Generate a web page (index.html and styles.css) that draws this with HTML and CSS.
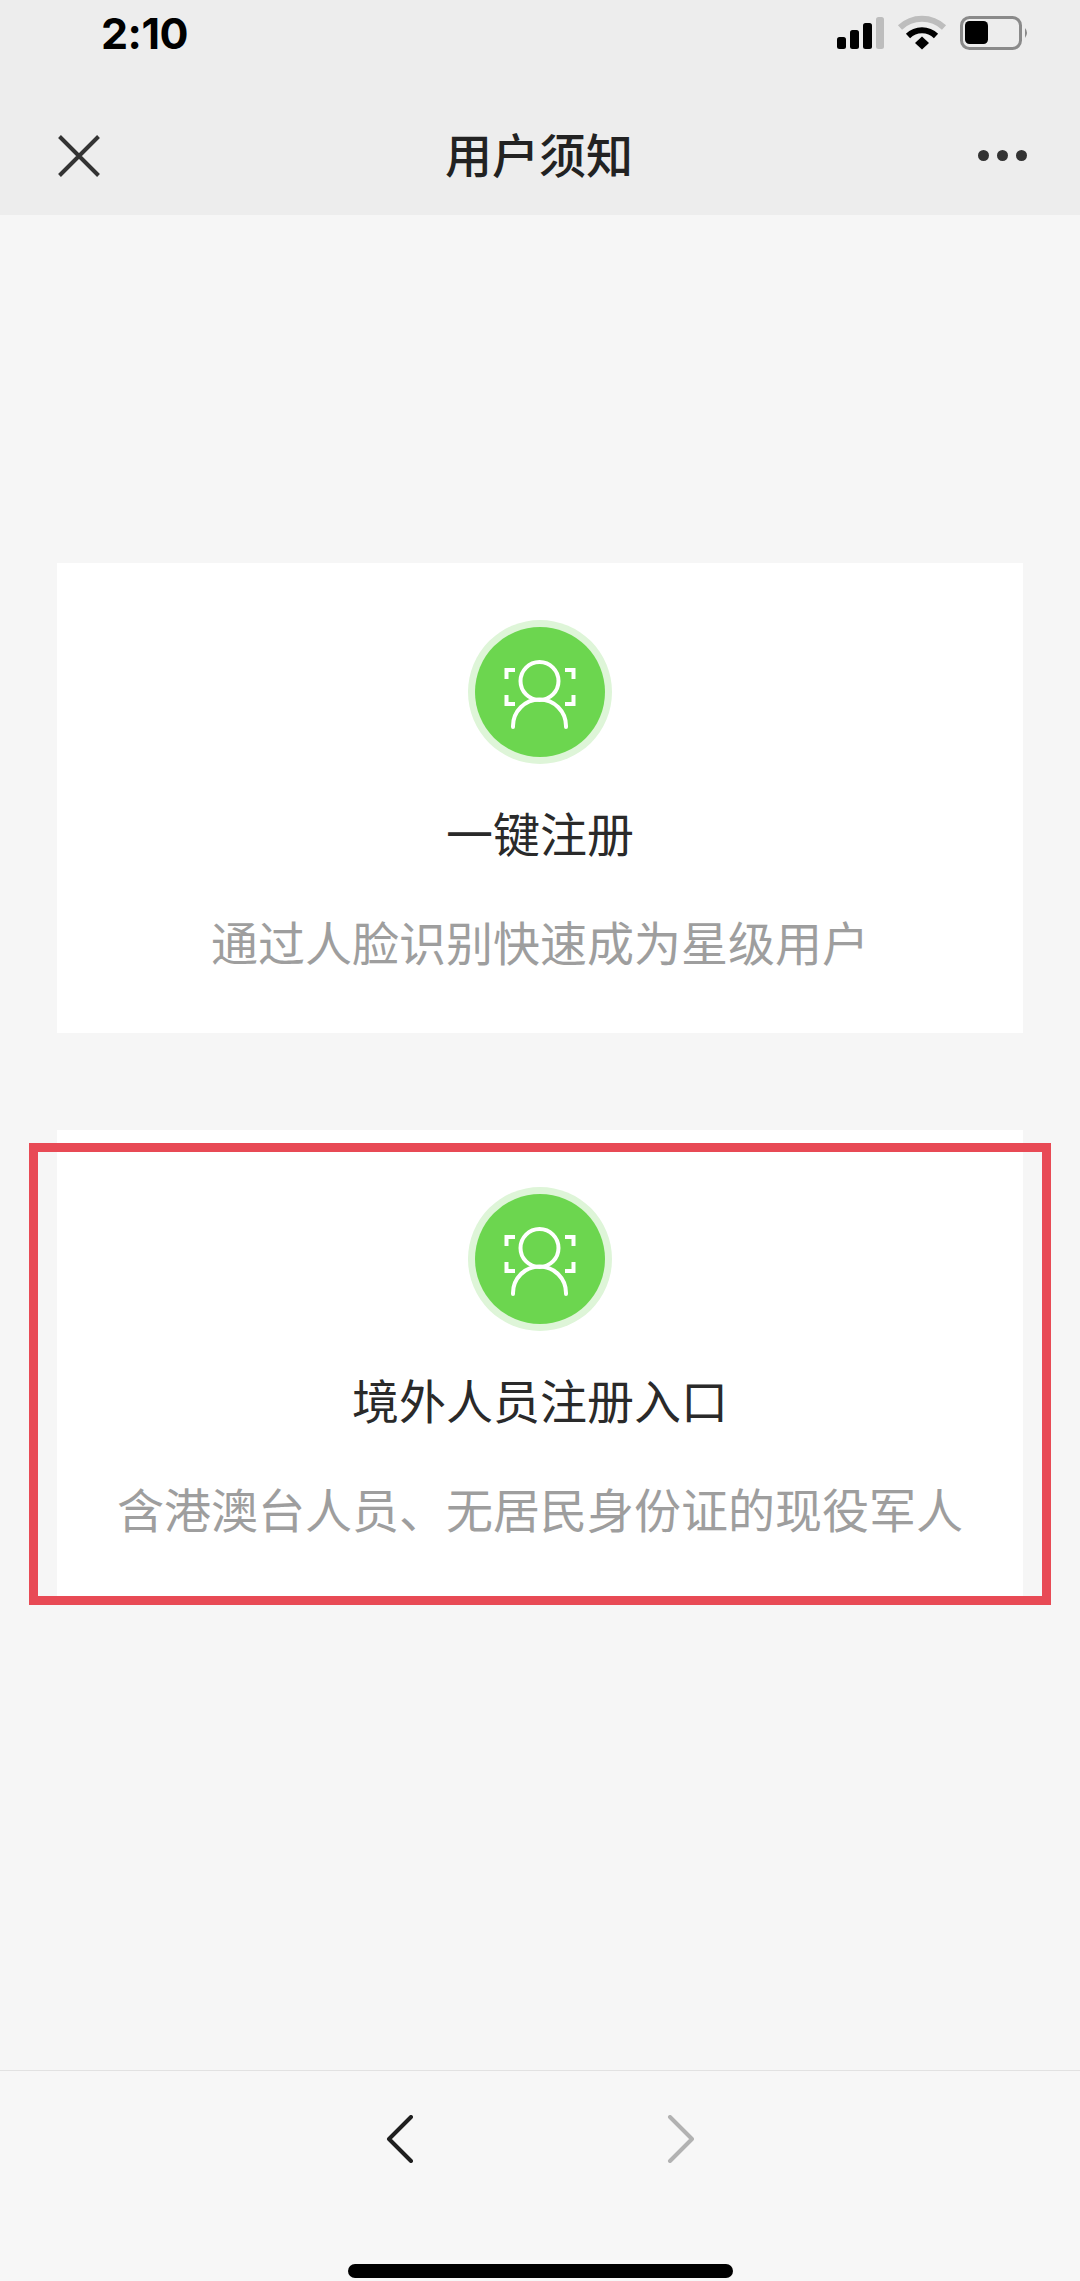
FILE: index.html
```html
<!DOCTYPE html>
<html lang="zh-CN">
<head>
<meta charset="utf-8">
<title>用户须知</title>
<link rel="stylesheet" href="styles.css">
</head>
<body>
<div class="page">
  <header class="header">
    <div class="status">
      <span class="time">2:10</span>
      <svg class="status-icons" width="193" height="36" viewBox="0 0 193 36">
        <rect x="0" y="22" width="9" height="12" rx="2.5" fill="#000"/>
        <rect x="13" y="15" width="9" height="19" rx="2.5" fill="#000"/>
        <rect x="26" y="8" width="9" height="26" rx="2.5" fill="#000"/>
        <rect x="39" y="2" width="8" height="32" rx="2.5" fill="#bdbdbd"/>
        <path d="M63 12.5 A32 32 0 0 1 107 12.5" fill="none" stroke="#bdbdbd" stroke-width="6"/>
        <path d="M71 21 A20 20 0 0 1 99 21" fill="none" stroke="#000" stroke-width="6"/>
        <path d="M78 28 L85 21.5 L92 28 L85 34.500 Z" fill="#000"/>
        <rect x="124.500" y="2.500" width="59" height="31" rx="8" fill="none" stroke="#8a8a8a" stroke-width="3"/>
        <rect x="128" y="6" width="23" height="23" rx="4.500" fill="#000"/>
        <path d="M188 13 Q192 17.500 188 23 Z" fill="#8a8a8a"/>
      </svg>
    </div>
    <nav class="navbar">
      <svg class="nav-close" width="42" height="42" viewBox="0 0 42 42">
        <path d="M1.500 1.500 L40.500 40.500 M40.500 1.500 L1.500 40.500" stroke="#333" stroke-width="4" fill="none"/>
      </svg>
      <h1 class="nav-title">用户须知</h1>
      <div class="nav-more"><i></i><i></i><i></i></div>
    </nav>
  </header>

  <main class="content">
    <section class="card">
      <svg class="face" width="144" height="144" viewBox="0 0 144 144">
        <circle cx="72" cy="72" r="72" fill="#def5d8"/>
        <circle cx="72" cy="72" r="65" fill="#6cd64f"/>
        <g fill="none" stroke="#fff" stroke-width="4">
          <path d="M47 50 H38.500 V59 M97 50 H105.500 V59 M38.500 75 V84 H47 M105.500 75 V84 H97"/>
          <circle cx="71.500" cy="61" r="19"/>
          <path d="M45 106 A26.500 26.500 0 0 1 98 106 V107 M45 106 V107" stroke-linecap="round"/>
        </g>
      </svg>
      <h2 class="card-title">一键注册</h2>
      <p class="card-sub">通过人脸识别快速成为星级用户</p>
    </section>
    <section class="card card-marked">
      <svg class="face" width="144" height="144" viewBox="0 0 144 144">
        <circle cx="72" cy="72" r="72" fill="#def5d8"/>
        <circle cx="72" cy="72" r="65" fill="#6cd64f"/>
        <g fill="none" stroke="#fff" stroke-width="4">
          <path d="M47 50 H38.500 V59 M97 50 H105.500 V59 M38.500 75 V84 H47 M105.500 75 V84 H97"/>
          <circle cx="71.500" cy="61" r="19"/>
          <path d="M45 106 A26.500 26.500 0 0 1 98 106 V107 M45 106 V107" stroke-linecap="round"/>
        </g>
      </svg>
      <h2 class="card-title">境外人员注册入口</h2>
      <p class="card-sub">含港澳台人员、无居民身份证的现役军人</p>
      <div class="highlight"></div>
    </section>
  </main>

  <footer class="footer">
    <div class="arrows">
      <svg width="28" height="48" viewBox="0 0 28 48">
        <path d="M25 2 L3 24 L25 46" fill="none" stroke="#1f1f1f" stroke-width="4" stroke-linecap="round" stroke-linejoin="round"/>
      </svg>
      <svg width="28" height="48" viewBox="0 0 28 48">
        <path d="M3 2 L25 24 L3 46" fill="none" stroke="#b2b2b2" stroke-width="4" stroke-linecap="round" stroke-linejoin="round"/>
      </svg>
    </div>
    <div class="home-bar"></div>
  </footer>
</div>
</body>
</html>
```
FILE: styles.css
```css
* { box-sizing: border-box; }
html, body { margin: 0; padding: 0; }
body {
  width: 1080px;
  height: 2281px;
  overflow: hidden;
  font-family: "Liberation Sans", "Noto Sans CJK SC", sans-serif;
  background: #f6f6f6;
}
.page {
  height: 2281px;
  display: flex;
  flex-direction: column;
}
.header {
  height: 215px;
  flex: none;
  background: #ededed;
  display: flex;
  flex-direction: column;
}
.status {
  height: 66px;
  padding: 13px 50px 0 101px;
  display: flex;
  justify-content: space-between;
  align-items: flex-start;
}
.time {
  font-family: "Inter", "Liberation Sans", sans-serif;
  font-size: 43px;
  line-height: 40px;
  font-weight: 700;
  color: #000;
  letter-spacing: -0.5px;
}
.status-icons { margin-top: 2px; }
.navbar {
  flex: 1;
  padding: 30px 53px 0 58px;
  display: flex;
  align-items: center;
  justify-content: space-between;
}
.nav-close { flex: none; }
.nav-title {
  margin: 0 0 6px;
  font-family: "Noto Sans CJK SC", sans-serif;
  font-size: 47px;
  line-height: 60px;
  font-weight: 500;
  color: #222;
}
.nav-more {
  display: flex;
  gap: 8px;
  width: 49px;
}
.nav-more i {
  width: 11px;
  height: 11px;
  border-radius: 50%;
  background: #333;
}
.content {
  flex: 1;
  padding: 348px 57px 0;
  display: flex;
  flex-direction: column;
  gap: 97px;
}
.card {
  position: relative;
  height: 470px;
  background: #fff;
  padding-top: 57px;
  display: flex;
  flex-direction: column;
  align-items: center;
  text-align: center;
}
.face { flex: none; }
.card-title {
  margin: 38px 0 0;
  font-family: "Noto Sans CJK SC", sans-serif;
  font-size: 47px;
  line-height: 60px;
  font-weight: 400;
  color: #2a2a2a;
}
.card-sub {
  margin: 49px 0 0;
  font-family: "Noto Sans CJK SC", sans-serif;
  font-size: 47px;
  line-height: 60px;
  font-weight: 400;
  color: #9e9e9e;
  white-space: nowrap;
}
.highlight {
  position: absolute;
  top: 13px;
  left: -28px;
  right: -28px;
  bottom: -5px;
  border: 9px solid #e84a55;
}
.footer {
  height: 211px;
  flex: none;
  background: #f7f7f7;
  border-top: 1px solid #e2e2e2;
  display: flex;
  flex-direction: column;
  align-items: center;
}
.arrows {
  margin-top: 44px;
  display: flex;
  gap: 253px;
}
.home-bar {
  margin-top: 101px;
  width: 385px;
  height: 14px;
  border-radius: 7px;
  background: #000;
}
```
